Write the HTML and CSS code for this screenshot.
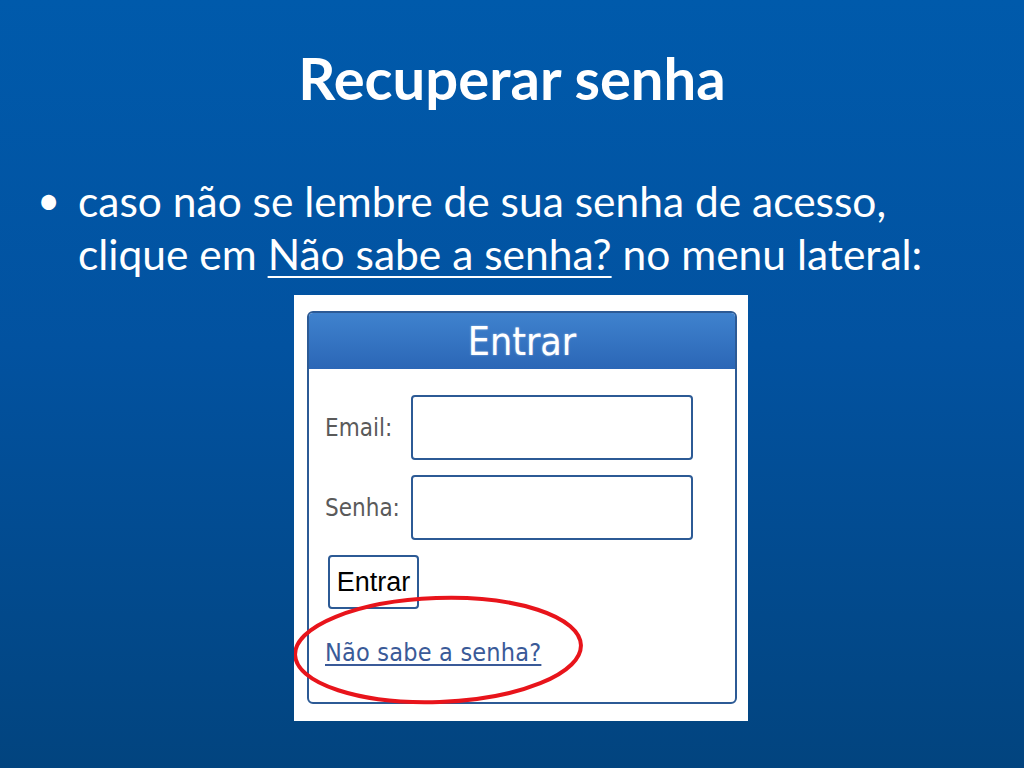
FILE: index.html
```html
<!DOCTYPE html>
<html lang="pt">
<head>
<meta charset="utf-8">
<title>Recuperar senha</title>
<link rel="stylesheet" href="styles.css">
</head>
<body>
<div class="slide">
  <h1 class="title">Recuperar senha</h1>
  <div class="bullet">
    <span class="dot">•</span>
    <p class="bullet-text">caso não se lembre de sua senha de acesso,<br>clique em <u>Não sabe a senha?</u> no menu lateral:</p>
  </div>
  <div class="shot">
    <div class="panel">
      <div class="panel-head">Entrar</div>
      <div class="panel-body">
        <div class="row">
          <span class="label">Email:</span>
          <span class="field"></span>
        </div>
        <div class="row">
          <span class="label">Senha:</span>
          <span class="field"></span>
        </div>
        <span class="btn">Entrar</span>
        <span class="link">Não sabe a senha?</span>
      </div>
    </div>
    <svg class="ring" width="454" height="426" viewBox="0 0 454 426">
      <ellipse cx="144" cy="355" rx="143" ry="52" fill="none" stroke="#e8141b" stroke-width="4" transform="rotate(-2 144 355)"/>
    </svg>
  </div>
</div>
</body>
</html>
```

FILE: styles.css
```css
html, body {
  margin: 0;
  padding: 0;
}
.slide {
  width: 1024px;
  height: 768px;
  background: linear-gradient(180deg, #005aab 0%, #0252a0 45%, #02447f 100%);
  display: flex;
  flex-direction: column;
  overflow: hidden;
  font-family: Lato, "Open Sans", sans-serif;
  color: #fff;
}
.title {
  margin: 43px 0 0;
  font-size: 58px;
  line-height: 70px;
  font-weight: 700;
  text-align: center;
}
.bullet {
  margin-top: 61px;
  display: flex;
  padding-left: 37px;
}
.dot {
  width: 41px;
  font-size: 40px;
  line-height: 53px;
}
.bullet-text {
  margin: 0;
  font-size: 42.5px;
  line-height: 53px;
}
.bullet-text u {
  text-decoration-thickness: 2px;
  text-underline-offset: 6px;
}
.shot {
  position: relative;
  margin: 15px 0 0 294px;
  width: 454px;
  height: 426px;
  background: #fff;
  padding: 16px 11px 0 13px;
  box-sizing: border-box;
}
.panel {
  width: 430px;
  height: 393px;
  border: 2px solid #2c5a95;
  border-radius: 6px;
  box-sizing: border-box;
  overflow: hidden;
  font-family: "DejaVu Sans Condensed", "DejaVu Sans", sans-serif;
  font-stretch: condensed;
}
.panel-head {
  height: 56px;
  background: linear-gradient(180deg, #3f82ce 0%, #2b66b6 100%);
  color: #fff;
  font-size: 39px;
  line-height: 58px;
  text-align: center;
  text-shadow: 0 0 2px rgba(255,255,255,0.5);
}
.panel-body {
  padding: 26px 0 0 16px;
  display: flex;
  flex-direction: column;
  align-items: flex-start;
}
.row {
  display: flex;
  align-items: center;
  margin-bottom: 15px;
}
.label {
  width: 86px;
  font-size: 24px;
  color: #5a5a5a;
}
.field {
  width: 282px;
  height: 65px;
  border: 2px solid #2c5a95;
  border-radius: 4px;
  box-sizing: border-box;
}
.btn {
  margin-left: 3px;
  width: 91px;
  height: 54px;
  border: 2px solid #2c5a95;
  border-radius: 4px;
  box-sizing: border-box;
  font-family: "Liberation Sans", Arial, sans-serif;
  font-stretch: normal;
  font-size: 27px;
  line-height: 50px;
  color: #000;
  text-align: center;
}
.link {
  margin-top: 29px;
  font-size: 25px;
  letter-spacing: 0.2px;
  color: #3a5a98;
  text-decoration: underline;
  text-decoration-thickness: 2px;
  text-underline-offset: 3px;
}
.ring {
  position: absolute;
  left: 0;
  top: 0;
}
```
